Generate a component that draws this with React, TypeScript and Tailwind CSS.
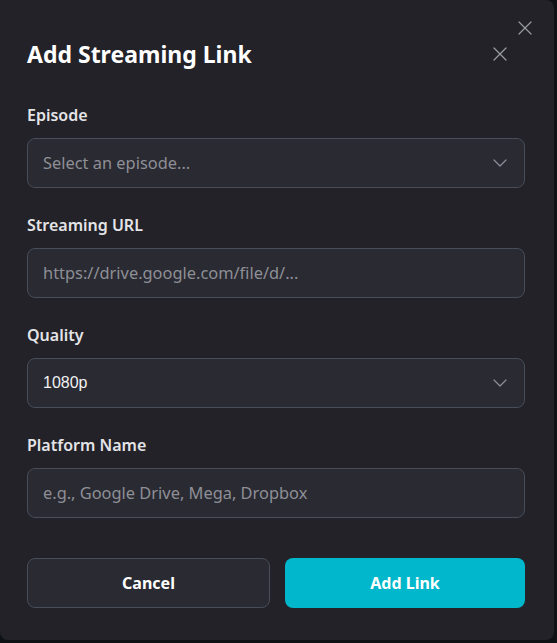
import React from "react";
import { X, ChevronDown } from "lucide-react";

const font = { fontFamily: "'Noto Sans', Lato, sans-serif" };

function Field({ label, children }: { label: string; children: React.ReactNode }) {
  return (
    <div className="mb-[25px]">
      <label className="block text-[16px] leading-[24px] font-semibold text-[#e4e4e7] mb-[11px]">
        {label}
      </label>
      {children}
    </div>
  );
}

function SelectBox({ value, placeholder }: { value?: string; placeholder?: string }) {
  return (
    <div className="flex h-[50px] items-center justify-between rounded-lg border border-[#474d59] bg-[#2a2a32] pl-[15px] pr-[12px]">
      {value ? (
        <span className="text-[16px] text-[#f1f1f3]" style={{ fontFamily: "'Liberation Sans', Arial, sans-serif" }}>
          {value}
        </span>
      ) : (
        <span className="text-[16.4px] text-[#8e8f96]">{placeholder}</span>
      )}
      <ChevronDown size={24} strokeWidth={1.2} className="text-[#8e9099]" />
    </div>
  );
}

function TextBox({ placeholder }: { placeholder: string }) {
  return (
    <div className="flex h-[50px] items-center rounded-lg border border-[#474d59] bg-[#2a2a32] px-[15px]">
      <span className="text-[16.4px] text-[#8e8f96]">{placeholder}</span>
    </div>
  );
}

export default function App() {
  return (
    <div className="min-h-screen bg-[#0f1215]" style={font}>
      <div className="relative w-[554px] h-[640px] rounded-r-lg rounded-bl-lg bg-[#222228] pl-[27px] pr-[29px] pt-[40px]">
        <button className="absolute right-[17px] top-[16px] text-[#9a9ba1]">
          <X size={24} strokeWidth={1.2} />
        </button>
        <div className="flex items-center justify-between pr-[13px] mb-[35px]">
          <h2 className="text-[23px] leading-[28px] font-bold text-white">Add Streaming Link</h2>
          <X size={24} strokeWidth={1.2} className="text-[#9a9ba1]" />
        </div>

        <Field label="Episode">
          <SelectBox placeholder="Select an episode..." />
        </Field>
        <Field label="Streaming URL">
          <TextBox placeholder="https://drive.google.com/file/d/..." />
        </Field>
        <Field label="Quality">
          <SelectBox value="1080p" />
        </Field>
        <Field label="Platform Name">
          <TextBox placeholder="e.g., Google Drive, Mega, Dropbox" />
        </Field>

        <div className="mt-[40px] flex gap-[15px]">
          <button className="h-[50px] w-[243px] rounded-lg border border-[#474d59] bg-[#2a2a32] text-[16px] font-bold text-white">
            Cancel
          </button>
          <button className="h-[50px] flex-1 rounded-lg bg-[#00b7cb] text-[16px] font-bold text-white">
            Add Link
          </button>
        </div>
      </div>
    </div>
  );
}
